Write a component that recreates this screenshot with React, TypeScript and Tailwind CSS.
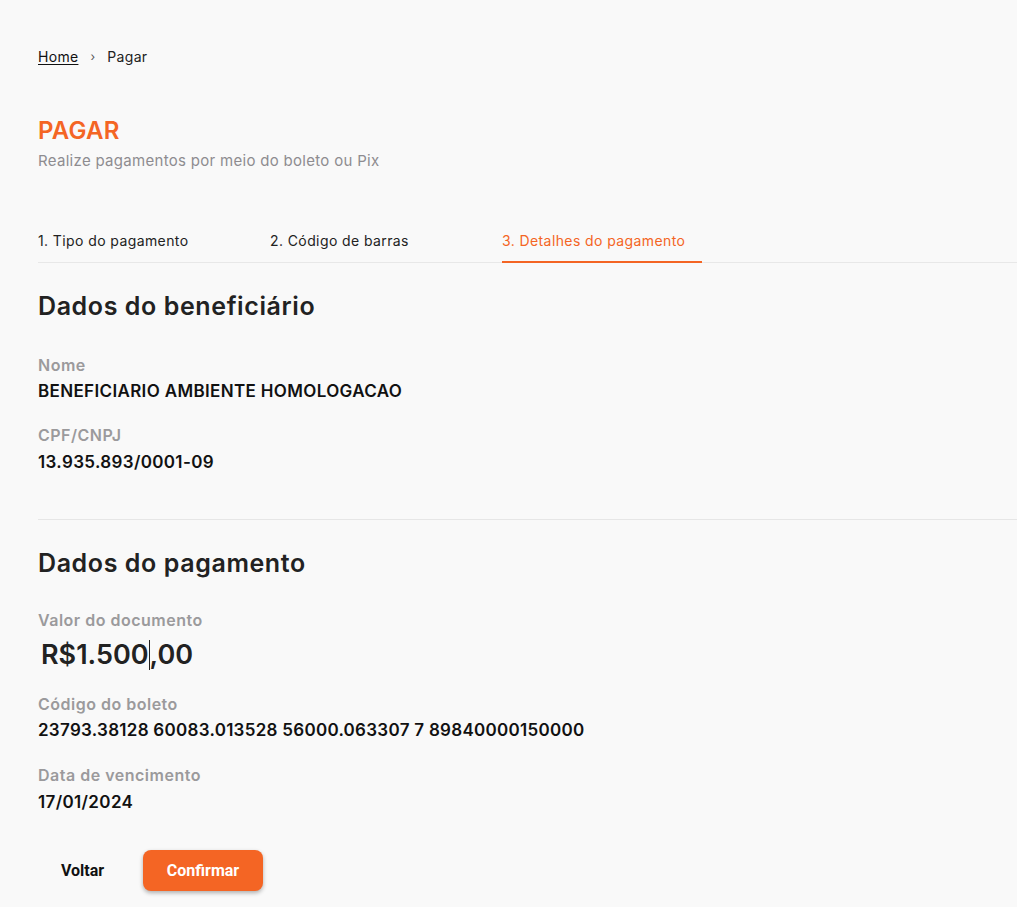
const Field = ({ label, value, gap = 'mt-[4px]', track = 'tracking-[0.35px]' }: { label: string; value: string; gap?: string; track?: string }) => (
  <div className="flex flex-col">
    <span className="text-[16px] font-semibold leading-[22px] tracking-[0.5px] text-[#9b9a9c]">{label}</span>
    <span className={`${gap} ${track} text-[17px] font-semibold leading-[22px] text-[#111]`}>{value}</span>
  </div>
);

const tabs = ['1. Tipo do pagamento', '2. Código de barras', '3. Detalhes do pagamento'];

export default function App() {
  return (
    <div className="min-h-[907px] bg-[#f9f9f9] pl-[38px] pt-[47px] font-['Inter',sans-serif] text-[#222]">
      <nav className="flex items-center text-[14px] leading-[20px] tracking-[0.3px]">
        <a className="text-[#111] underline underline-offset-2">Home</a>
        <span className="mx-[12px] text-[12px] text-[#555]">›</span>
        <span className="text-[#222]">Pagar</span>
      </nav>

      <h1 className="mt-[49px] text-[24px] font-semibold leading-[30px] tracking-[0.2px] text-[#f46524]">PAGAR</h1>
      <p className="mt-[5px] text-[15px] leading-[20px] tracking-[0.3px] text-[#8e8c90]">
        Realize pagamentos por meio do boleto ou Pix
      </p>

      <div className="mt-[57px] flex gap-[32px] border-b border-[#e8e8e8]">
        {tabs.map((t, i) => (
          <div
            key={t}
            className={`w-[200px] pb-[10px] pt-[3px] text-[14px] leading-[20px] tracking-[0.4px] ${
              i === 2 ? 'border-b-2 border-[#f46524] text-[#f46524] -mb-[1px]' : 'text-[#222]'
            }`}
          >
            {t}
          </div>
        ))}
      </div>

      <h2 className="mt-[27px] text-[25px] font-semibold leading-[32px] tracking-[0.6px] text-[#222]">
        Dados do beneficiário
      </h2>
      <div className="mt-[32px] flex flex-col gap-[22px]">
        <Field label="Nome" value="BENEFICIARIO AMBIENTE HOMOLOGACAO" />
        <Field label="CPF/CNPJ" value="13.935.893/0001-09" gap="mt-[5px]" />
      </div>

      <div className="mt-[46px] border-t border-[#e6e6e6]" />

      <h2 className="mt-[27px] text-[25px] font-semibold leading-[32px] tracking-[0.6px] text-[#222]">
        Dados do pagamento
      </h2>
      <div className="mt-[30px] flex flex-col">
        <span className="text-[16px] font-semibold leading-[22px] tracking-[0.5px] text-[#9b9a9c]">
          Valor do documento
        </span>
        <div className="mt-[6px] flex h-[36px] items-center pl-[3px] text-[27px] font-semibold text-[#222]">
          <span>R$1.500</span>
          <span className="h-[30px] w-px bg-[#222]" />
          <span>,00</span>
        </div>
      </div>
      <div className="mt-[20px] flex flex-col gap-[23px]">
        <Field
          label="Código do boleto"
          value="23793.38128 60083.013528 56000.063307 7 89840000150000"
          track="tracking-[0.28px]"
        />
        <Field label="Data de vencimento" value="17/01/2024" gap="mt-[5px]" />
      </div>

      <div className="mt-[37px] flex items-center gap-[16px] font-['Roboto',sans-serif]">
        <button className="h-[41px] w-[89px] text-[16px] font-bold text-[#111]">Voltar</button>
        <button className="h-[41px] w-[120px] rounded-[8px] bg-[#f46524] text-[16px] font-bold text-white shadow-[0_2px_4px_rgba(0,0,0,0.3)]">
          Confirmar
        </button>
      </div>
    </div>
  );
}
